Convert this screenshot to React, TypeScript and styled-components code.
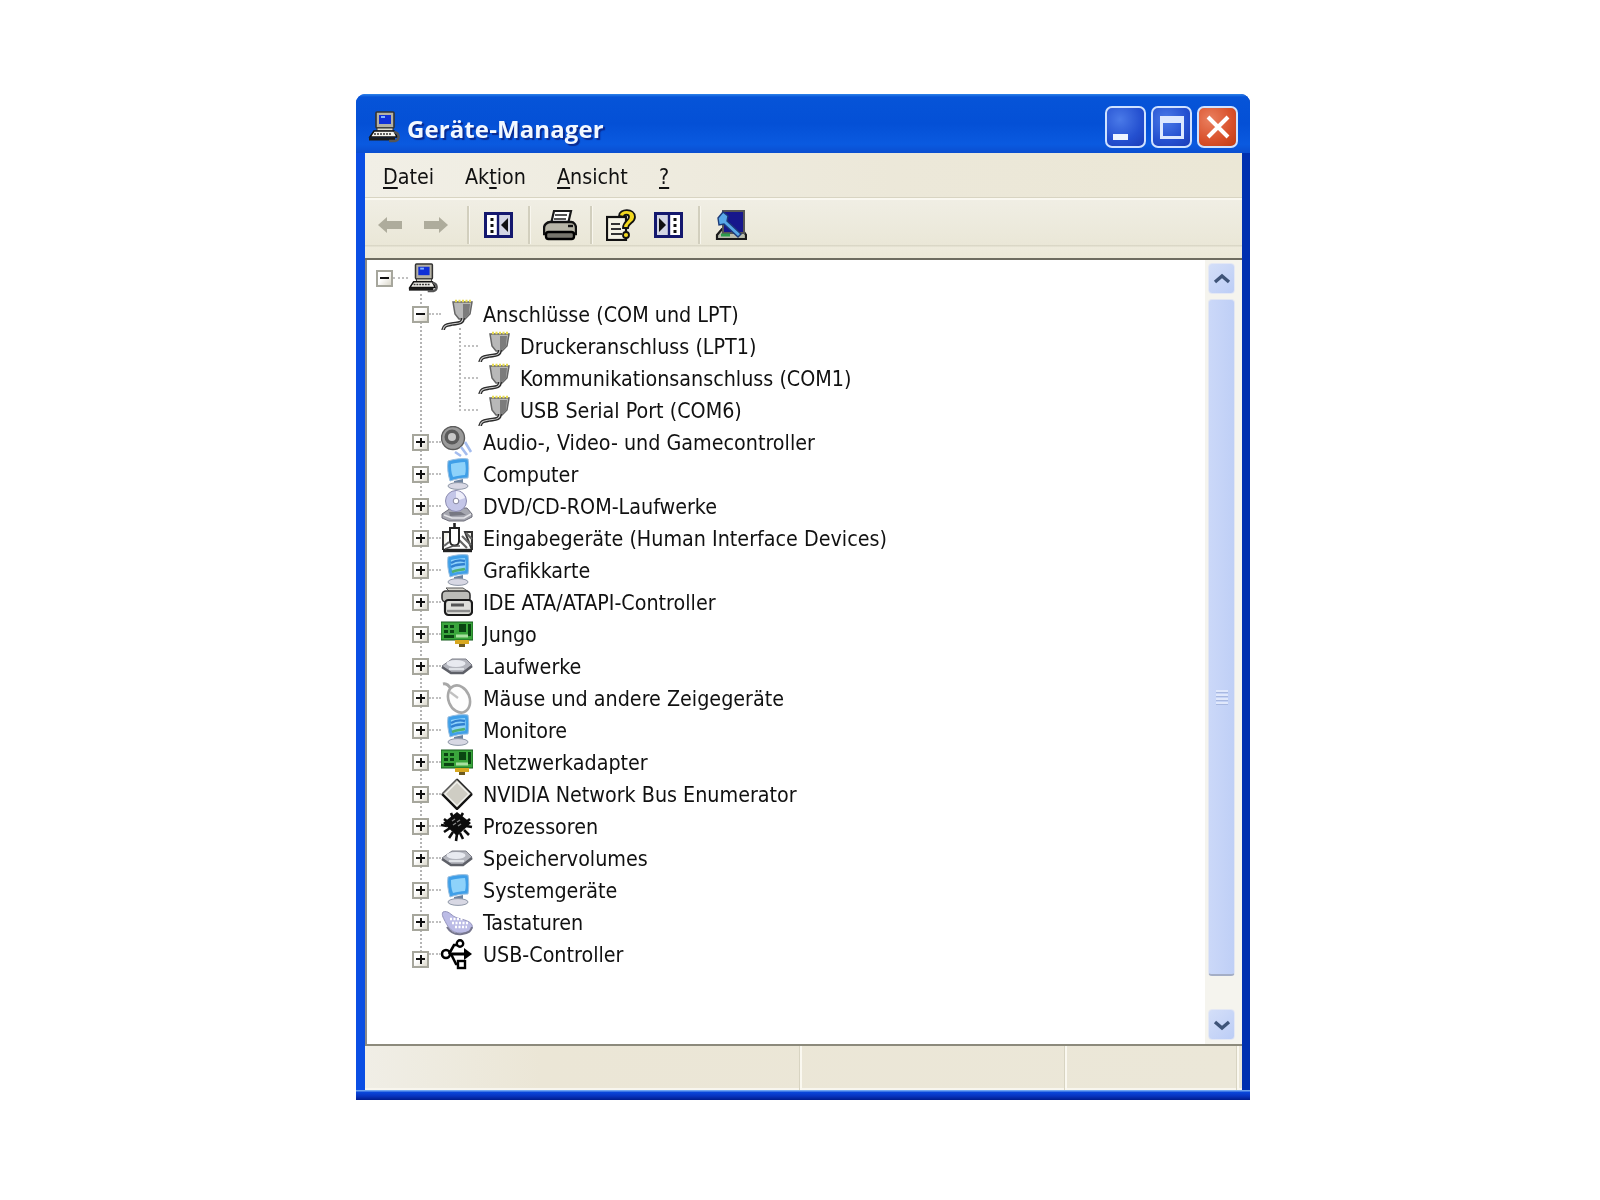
import React from 'react'
import styled, { createGlobalStyle } from 'styled-components'

const Global = createGlobalStyle`
  html, body { margin: 0; padding: 0; background: #fff; }
`

/* ---------- icons ---------- */

const S = ({ children, size = 32 }: { children: React.ReactNode; size?: number }) => (
  <svg width={size} height={size} viewBox="0 0 32 32">{children}</svg>
)

const ComputerIcon = ({ size = 32 }: { size?: number }) => (
  <S size={size}>
    <rect x="8" y="1" width="18" height="16" rx="1" fill="#b4b1a4" stroke="#333" strokeWidth="1.6" />
    <rect x="11" y="4" width="12" height="9" fill="#1030d8" />
    <rect x="13" y="5" width="4" height="2" fill="#7fb0ff" />
    <rect x="9" y="17" width="16" height="3" fill="#dedcd0" stroke="#333" />
    <path d="M6 20h20l3 6H2z" fill="#f4f3ee" stroke="#111" strokeWidth="1.6" />
    <path d="M6 23h18" stroke="#333" strokeWidth="1.6" strokeDasharray="2 1" />
    <path d="M1 28h26" stroke="#1a1a1a" strokeWidth="3" />
    <path d="M26 21c6 1 6 8 1 9h-6" stroke="#555" strokeWidth="2.4" fill="none" />
  </S>
)

const PortIcon = () => (
  <S>
    <path d="M12 4h19l-2 12-5 5h-6l-4-5z" fill="#b8b8b8" stroke="#666" strokeWidth="1.5" />
    <path d="M22 6h7l-1 10-4 4h-2z" fill="#7c7c7c" />
    <path d="M14 3h16" stroke="#e8dc50" strokeWidth="2.6" strokeDasharray="2 1.5" />
    <path d="M22 20c0 6-6 5-11 6s-8 1-9 6" stroke="#2a2a2a" strokeWidth="3.8" fill="none" />
    <path d="M22 20c0 6-6 5-11 6s-8 1-9 6" stroke="#ccc" strokeWidth="1.1" fill="none" />
  </S>
)

const SpeakerIcon = () => (
  <S>
    <circle cx="12" cy="12" r="11.5" fill="#9a9a9a" stroke="#5c5c5c" strokeWidth="1.4" />
    <circle cx="11" cy="11" r="7.5" fill="#5a5a5a" />
    <circle cx="11" cy="11" r="4" fill="#c8c8c8" />
    <path d="M14 26l6 4M20 21l6 8M24 16l6 10" stroke="#a4bcee" strokeWidth="2.6" fill="none" />
  </S>
)

const Tube = ({ children }: { children?: React.ReactNode }) => (
  <S>
    <path d="M7 3c6-2 14-3 20-2 1 6 1 13 0 19-6 0-13 1-18 3-2-6-3-14-2-20z" fill="#3f9fe8" stroke="#9cc0e0" />
    <path d="M10 6c4-1 9-2 14-2 1 5 1 9 0 13-4 0-8 1-12 2-2-4-2-9-2-13z" fill="#8ed2fa" />
    {children}
    <path d="M13 23l9-2v5h-9z" fill="#6e84a0" />
    <ellipse cx="17" cy="28" rx="10" ry="3.4" fill="#d8d8e4" stroke="#8f98a8" />
  </S>
)

const SystemIcon = () => <Tube />

const DisplayIcon = () => (
  <Tube>
    <path d="M10 9c5-3 10-3 14-2M10 13c5-3 10-2 14-3" stroke="#2f7fd0" strokeWidth="2.4" fill="none" />
    <path d="M11 18c4-2 9-2 13-3" stroke="#4cb070" strokeWidth="2.6" fill="none" />
  </Tube>
)

const DvdIcon = () => (
  <S>
    <path d="M1 24l9-6h16l5 6v3l-8 4H8l-7-3z" fill="#a6a7b0" stroke="#6c6c78" />
    <path d="M3 25l8 3h12l7-4" stroke="#e4e4e8" strokeWidth="1.5" fill="none" />
    <circle cx="15" cy="11" r="10.5" fill="#c4c6e8" stroke="#8c8cb0" />
    <path d="M15 1a10 10 0 0 1 9 7l-9 3z" fill="#eeeefa" />
    <circle cx="15" cy="11" r="2.8" fill="#fff" stroke="#8888a0" />
    <path d="M8 22l12 0 5 3-16 1z" fill="#777882" />
  </S>
)

const InputIcon = () => (
  <S>
    <path d="M2 28V10h6M24 10h7v18z" fill="#f2f1ea" stroke="#333" strokeWidth="2" />
    <path d="M2 28.5h29" stroke="#222" strokeWidth="3.4" />
    <path d="M21 14l9 9M18 18l8 8M25 11l6 6M3 24l5-4" stroke="#666" strokeWidth="2.2" />
    <path d="M9 6h9v13a4.5 4.5 0 0 1-9 0z" fill="#fff" stroke="#222" strokeWidth="2" />
    <path d="M13.5 7V1" stroke="#222" strokeWidth="2.6" />
    <path d="M4 27l8-3h7" stroke="#555" strokeWidth="1.6" fill="none" />
  </S>
)

const IdeIcon = () => (
  <S>
    <path d="M5 2h17l6 4H9z" fill="#d8d6ce" stroke="#555" />
    <rect x="1" y="5" width="28" height="11" rx="4" fill="#bcbcb8" stroke="#333" strokeWidth="1.6" />
    <rect x="4" y="14" width="27" height="15" rx="3.5" fill="#dededa" stroke="#1a1a1a" strokeWidth="2.2" />
    <path d="M10 19h13" stroke="#555" strokeWidth="3" />
    <path d="M6 25h23" stroke="#8c8c8c" strokeWidth="2.4" />
  </S>
)

const CardIcon = () => (
  <S>
    <rect x="0" y="4" width="32" height="18" fill="#3aa63c" stroke="#155a1c" />
    <g fill="#0a4412">
      <rect x="3" y="7" width="4" height="3" />
      <rect x="9" y="7" width="4" height="3" />
      <rect x="3" y="12" width="4" height="3" />
      <rect x="9" y="12" width="4" height="3" />
      <rect x="3" y="17" width="10" height="3" />
      <rect x="18" y="6" width="7" height="8" />
      <rect x="27" y="6" width="3" height="12" />
    </g>
    <path d="M15 18h12" stroke="#a8e0a0" strokeWidth="3" />
    <rect x="14" y="22" width="14" height="4" fill="#d8a820" />
    <rect x="18" y="26" width="6" height="3" fill="#6c5a20" />
  </S>
)

const DriveIcon = () => (
  <S>
    <path d="M1 16l10-7h14l6 6-2 3-8 5H9z" fill="#b4b6be" stroke="#7c7e88" />
    <ellipse cx="15" cy="13.5" rx="9.5" ry="3.4" fill="#e8eaf0" />
    <path d="M1 17l9 6h12l9-7" stroke="#5e6068" strokeWidth="2.6" fill="none" />
    <path d="M8 19h15" stroke="#eef0f4" strokeWidth="1.5" />
  </S>
)

const MouseIcon = () => (
  <S>
    <path d="M2 2c4-1 6 2 8 5" stroke="#a8a8a8" strokeWidth="3" fill="none" />
    <ellipse cx="18" cy="17" rx="10.5" ry="14" transform="rotate(-22 18 17)" fill="#fdfdfd" stroke="#a8a8a8" strokeWidth="2.6" />
    <path d="M9 10l8 6" stroke="#c0c0c0" strokeWidth="2.2" />
  </S>
)

const DiamondIcon = () => (
  <S>
    <path d="M16 1l15 15-15 15L1 16z" fill="#bebcb4" />
    <path d="M16 4L4 16l12 12 12-12z" fill="#cfcdc4" stroke="#f2f2ee" strokeWidth="1.4" />
    <path d="M1 16l15 15 15-15" stroke="#111" strokeWidth="2.4" fill="none" />
    <path d="M16 1L1 16" stroke="#555" strokeWidth="1.5" />
    <path d="M16 1l15 15" stroke="#222" strokeWidth="1.5" />
  </S>
)

const CpuIcon = () => (
  <S>
    <path d="M16 2l14 11-14 13L2 13z" fill="#0c0c0c" />
    <path d="M3 9l4 3M0 15l6 1M3 22l6-4M8 28l4-6M15 31l1-7M22 29l-3-6M28 25l-5-5M31 17l-6-1M29 9l-5 4M22 3l-3 5M10 3l2 5" stroke="#0c0c0c" strokeWidth="2.6" />
    <path d="M11 11l3-2M16 12l3-2M12 15l3-2M17 16l3-2" stroke="#888" strokeWidth="1.4" />
  </S>
)

const KeyboardIcon = () => (
  <S>
    <path d="M2 6c5-2 8 3 12 5s15 3 17 8-4 8-12 8-12-6-14-10S0 9 2 6z" fill="#bcbce6" stroke="#9494bc" />
    <path d="M9 13h13M11 17h16M14 21h12" stroke="#fff" strokeWidth="2.4" strokeDasharray="2 1.5" />
    <path d="M6 21c3 5 8 8 15 7s9-3 10-7" stroke="#77778e" strokeWidth="2" fill="none" />
  </S>
)

const UsbIcon = () => (
  <S>
    <path d="M3 16h23" stroke="#000" strokeWidth="3" />
    <path d="M23 10l8 6-8 6z" fill="#000" />
    <circle cx="5" cy="16" r="4" fill="#fff" stroke="#000" strokeWidth="2.6" />
    <path d="M8 16l5-9h4" stroke="#000" strokeWidth="2.6" fill="none" />
    <circle cx="19" cy="5.5" r="3.2" fill="#fff" stroke="#000" strokeWidth="2.4" />
    <path d="M10 16l5 10h3" stroke="#000" strokeWidth="2.6" fill="none" />
    <rect x="17" y="23" width="7" height="7" fill="#fff" stroke="#000" strokeWidth="2.4" />
  </S>
)

const BackIcon = ({ flip }: { flip?: boolean }) => (
  <svg width="24" height="16" viewBox="0 0 24 16" style={flip ? { transform: 'scaleX(-1)' } : undefined}>
    <path d="M0 8l9-8v4h15v8H9v4z" fill="#aeac9c" />
  </svg>
)

const PaneIcon = ({ flip }: { flip?: boolean }) => (
  <svg width="29" height="26" viewBox="0 0 29 26" style={flip ? { transform: 'scaleX(-1)' } : undefined}>
    <rect x="1.5" y="1.5" width="26" height="23" fill="#fff" stroke="#14186e" strokeWidth="3" />
    <rect x="14" y="3" width="12" height="20" fill="#d4d6e4" />
    <path d="M14 1v24" stroke="#14186e" strokeWidth="2.4" />
    <path d="M8 6v3M8 12v3M8 18v3" stroke="#111" strokeWidth="3" />
    <path d="M24 6v14l-7-7z" fill="#111" />
  </svg>
)

const PrinterIcon = () => (
  <svg width="34" height="32" viewBox="0 0 34 32">
    <path d="M11 2h17l-3 13H8z" fill="#fff" stroke="#1a1a1a" strokeWidth="2.2" />
    <path d="M12 6h12M11 10h12" stroke="#555" strokeWidth="2" />
    <path d="M7 13h21c3 0 5 3 5 6v6H1v-6c0-3 3-6 6-6z" fill="#b8b6a8" stroke="#111" strokeWidth="2.4" />
    <rect x="3" y="23" width="28" height="7" rx="2.5" fill="#77756c" stroke="#000" strokeWidth="2.4" />
    <path d="M25 17h5" stroke="#111" strokeWidth="2.4" />
  </svg>
)

const HelpIcon = () => (
  <svg width="32" height="32" viewBox="0 0 32 32">
    <rect x="1" y="8" width="19" height="23" fill="#f4f2e4" stroke="#111" strokeWidth="2.2" />
    <path d="M5 15h9M5 20h10M5 25h11" stroke="#333" strokeWidth="2.2" />
    <path d="M13 7c0-8 16-8 16 1 0 6-7 6-7 11h-5c0-7 6-7 6-11 0-3-5-3-5 0z" fill="#f2d820" stroke="#111" strokeWidth="1.8" />
    <circle cx="20" cy="26" r="3" fill="#f2d820" stroke="#111" strokeWidth="1.8" />
  </svg>
)

const ScanIcon = () => (
  <svg width="32" height="32" viewBox="0 0 32 32">
    <path d="M2 26l5-6h20l4 6v4H2z" fill="#b8bcac" stroke="#1a1a1a" strokeWidth="2.2" />
    <rect x="8" y="2" width="21" height="22" fill="#16168c" stroke="#555" strokeWidth="2" />
    <path d="M3 9l5-6 5 4-1 5 14 13-3 3-14-13-5 1z" fill="#58a8e8" stroke="#1c3a78" strokeWidth="1.4" />
    <path d="M6 26h9" stroke="#2c9a4c" strokeWidth="3" />
  </svg>
)

const Chevron = ({ down }: { down?: boolean }) => (
  <svg width="18" height="12" viewBox="0 0 18 12">
    <path d={down ? 'M2 3l7 6 7-6' : 'M2 9l7-6 7 6'} fill="none" stroke="#3f5478" strokeWidth="3.4" />
  </svg>
)

/* ---------- data ---------- */

type Item = { name: string; icon: React.ReactNode }

const ports = ['Druckeranschluss (LPT1)', 'Kommunikationsanschluss (COM1)', 'USB Serial Port (COM6)']

const devices: Item[] = [
  { name: 'Audio-, Video- und Gamecontroller', icon: <SpeakerIcon /> },
  { name: 'Computer', icon: <SystemIcon /> },
  { name: 'DVD/CD-ROM-Laufwerke', icon: <DvdIcon /> },
  { name: 'Eingabegeräte (Human Interface Devices)', icon: <InputIcon /> },
  { name: 'Grafikkarte', icon: <DisplayIcon /> },
  { name: 'IDE ATA/ATAPI-Controller', icon: <IdeIcon /> },
  { name: 'Jungo', icon: <CardIcon /> },
  { name: 'Laufwerke', icon: <DriveIcon /> },
  { name: 'Mäuse und andere Zeigegeräte', icon: <MouseIcon /> },
  { name: 'Monitore', icon: <DisplayIcon /> },
  { name: 'Netzwerkadapter', icon: <CardIcon /> },
  { name: 'NVIDIA Network Bus Enumerator', icon: <DiamondIcon /> },
  { name: 'Prozessoren', icon: <CpuIcon /> },
  { name: 'Speichervolumes', icon: <DriveIcon /> },
  { name: 'Systemgeräte', icon: <SystemIcon /> },
  { name: 'Tastaturen', icon: <KeyboardIcon /> },
  { name: 'USB-Controller', icon: <UsbIcon /> },
]

const App = () => {
  return (
    <Page>
      <Global />
      <Window>
        <TitleBar>
          <ComputerIcon size={32} />
          <Title>Geräte-Manager</Title>
          <Caption>
            <CaptionButton>
              <MinGlyph />
            </CaptionButton>
            <CaptionButton>
              <MaxGlyph />
            </CaptionButton>
            <CaptionButton $close>
              <svg width="28" height="28" viewBox="0 0 28 28">
                <path d="M4 4l20 20M24 4L4 24" stroke="#fff" strokeWidth="4" />
              </svg>
            </CaptionButton>
          </Caption>
        </TitleBar>

        <Client>
          <MenuBar>
            <MenuItem $w={82}><u>D</u>atei</MenuItem>
            <MenuItem $w={92}>Ak<u>t</u>ion</MenuItem>
            <MenuItem $w={102}><u>A</u>nsicht</MenuItem>
            <MenuItem $w={20}><u>?</u></MenuItem>
          </MenuBar>

          <ToolBar>
            <Tool $w={50}><BackIcon /></Tool>
            <Tool $w={42}><BackIcon flip /></Tool>
            <Sep $left={10} />
            <Tool $w={59}><PaneIcon /></Tool>
            <Sep />
            <Tool $w={60}><PrinterIcon /></Tool>
            <Sep />
            <Tool $w={60}><HelpIcon /></Tool>
            <Tool $w={32}><PaneIcon flip /></Tool>
            <Sep $left={14} />
            <Tool $w={62}><ScanIcon /></Tool>
          </ToolBar>

          <Content>
            <Tree>
              <RootRow>
                <Expander>
                  <Minus />
                </Expander>
                <RootStub />
                <ComputerIcon size={30} />
              </RootRow>
              <Branch>
                <Row>
                  <Expander $onLine>
                    <Minus />
                  </Expander>
                  <Stub />
                  <Icon><PortIcon /></Icon>
                  <Label>Anschlüsse (COM und LPT)</Label>
                </Row>
                <SubBranch>
                  {ports.map((name) => (
                    <Row key={name}>
                      <SubStub />
                      <Icon><PortIcon /></Icon>
                      <Label $sub>{name}</Label>
                    </Row>
                  ))}
                </SubBranch>
                {devices.map((d, i) => (
                  <Row key={d.name}>
                    <Expander $onLine $drop={i === devices.length - 1 ? 5 : 0}>
                      <Minus />
                      <PlusBar />
                    </Expander>
                    <Stub />
                    <Icon>{d.icon}</Icon>
                    <Label>{d.name}</Label>
                  </Row>
                ))}
              </Branch>
            </Tree>

            <ScrollBar>
              <ScrollButton><Chevron /></ScrollButton>
              <Thumb>
                <Grip />
                <Grip />
                <Grip />
                <Grip />
              </Thumb>
              <ScrollButton $down><Chevron down /></ScrollButton>
            </ScrollBar>
          </Content>

          <StatusBar>
            <StatusCell $w={437} />
            <StatusCell $w={265} />
            <StatusCell $w={172} />
          </StatusBar>
        </Client>
        <BottomEdge />
      </Window>
    </Page>
  )
}

export default App

const Page = styled.div`
  width: 1600px;
  height: 1200px;
  padding: 94px 0 0 356px;
  box-sizing: border-box;
  background: #fff;
  overflow: hidden;
`
const Window = styled.div`
  width: 894px;
  height: 1006px;
  display: flex;
  flex-direction: column;
  border-radius: 9px 9px 0 0;
  background: linear-gradient(90deg, #0a4ee4 0, #0a4ee4 9px, #0030b0 9px, #0030b0 100%);
  padding: 0 8px 0 9px;
  box-sizing: border-box;
  filter: blur(0.7px);
  font-family: "DejaVu Sans", sans-serif;
  font-stretch: condensed;
  color: #111;
`
const TitleBar = styled.div`
  height: 59px;
  flex: none;
  margin: 0 -8px 0 -9px;
  padding: 7px 9px 0 12px;
  box-sizing: border-box;
  display: flex;
  align-items: center;
  border-radius: 9px 9px 0 0;
  background: linear-gradient(180deg, #2f84ea 0, #0654d8 3px, #0450d6 50%, #0a5ae0 85%, #0a4ed0 100%);
`
const Title = styled.div`
  margin: 2px 0 0 7px;
  font-family: "Open Sans", sans-serif;
  font-stretch: normal;
  font-weight: 700;
  font-size: 24px;
  letter-spacing: 0.1px;
  color: #f2f8ff;
  text-shadow: 2px 2px 1px #0a2a90;
`
const Caption = styled.div`
  margin-left: auto;
  display: flex;
  gap: 5px;
  margin-right: 3px;
`
const CaptionButton = styled.div<{ $close?: boolean }>`
  width: 41px;
  height: 42px;
  box-sizing: border-box;
  border: 2px solid #cfe2ff;
  border-radius: 7px;
  display: flex;
  align-items: center;
  justify-content: center;
  position: relative;
  background: ${(p) =>
    p.$close
      ? 'radial-gradient(circle at 30% 30%, #ea8060, #d8502a 60%, #c03c14)'
      : 'radial-gradient(circle at 35% 30%, #4a7ae8, #2450d0 60%, #1a3cb8)'};
`
const MinGlyph = styled.div`
  width: 15px;
  height: 6px;
  background: #eef4ff;
  margin: 20px 10px 0 0;
`
const MaxGlyph = styled.div`
  width: 24px;
  height: 23px;
  box-sizing: border-box;
  border: 3px solid #dce8ff;
  border-top-width: 7px;
`
const Client = styled.div`
  height: 937px;
  flex: none;
  display: flex;
  flex-direction: column;
  background: #ece9d8;
  box-shadow: inset 1px 0 0 #dfe9ff;
`
const BottomEdge = styled.div`
  height: 10px;
  flex: none;
  margin: 0 -8px 0 -9px;
  background: linear-gradient(180deg, #6fa4f0 0, #6fa4f0 1px, #0a48dc 2px, #0834c0 6px, #001c8c 100%);
`
const MenuBar = styled.div`
  height: 47px;
  flex: none;
  box-sizing: border-box;
  padding: 2px 0 0 18px;
  display: flex;
  align-items: center;
  font-size: 21.3px;
  border-bottom: 2px solid #faf8f0;
  box-shadow: inset 0 -1px 0 #d8d4c2;
  background: linear-gradient(90deg, #f1efe6 0%, #ece8d9 60%, #ebe7d6 100%);
`
const MenuItem = styled.div<{ $w: number }>`
  width: ${(p) => p.$w}px;
  flex: none;
  u { text-underline-offset: 3px; }
`
const ToolBar = styled.div`
  height: 58px;
  flex: none;
  box-sizing: border-box;
  padding: 4px 0 13px 0;
  display: flex;
  align-items: center;
  background: linear-gradient(180deg, #f0eee4 0, #eae7d7 78%, #d8d5c4 78%, #eeebdc 82%, #ece9d8 100%);
`
const Tool = styled.div<{ $w: number }>`
  width: ${(p) => p.$w}px;
  flex: none;
  display: flex;
  justify-content: center;
`
const Sep = styled.div<{ $left?: number }>`
  width: 2px;
  height: 38px;
  flex: none;
  margin-left: ${(p) => p.$left ?? 0}px;
  background: #d2cfbe;
  box-shadow: 1px 0 0 #f8f6ee;
`
const Content = styled.div`
  flex: 1;
  min-height: 0;
  display: flex;
  background: #fff;
  border-top: 2px solid #6e6c60;
  border-bottom: 2px solid #8c8a7c;
`
const Tree = styled.div`
  flex: 1;
  padding-top: 2px;
  border-left: 2px solid #8a8a8a;
  background: #fff;
`
const RootRow = styled.div`
  height: 32px;
  margin-bottom: 4px;
  padding-left: 9px;
  display: flex;
  align-items: center;
`
const Branch = styled.div`
  position: relative;
  margin-left: 53px;
  &::before {
    content: '';
    position: absolute;
    left: 0;
    top: -4px;
    bottom: 10px;
    border-left: 2px dotted #b4b4b4;
  }
`
const SubBranch = styled.div`
  position: relative;
  margin-left: 39px;
  &::before {
    content: '';
    position: absolute;
    left: 0;
    top: -2px;
    bottom: 15px;
    border-left: 2px dotted #b4b4b4;
  }
`
const Row = styled.div`
  height: 32px;
  display: flex;
  align-items: center;
  position: relative;
`
const Expander = styled.div<{ $onLine?: boolean; $drop?: number }>`
  width: 17px;
  height: 17px;
  flex: none;
  box-sizing: border-box;
  position: relative;
  margin-left: ${(p) => (p.$onLine ? -8 : 0)}px;
  top: ${(p) => p.$drop ?? 0}px;
  border: 2px solid #a6a69c;
  background: linear-gradient(135deg, #fff 40%, #dcd9cc 100%);
  display: flex;
  align-items: center;
  justify-content: center;
`
const Minus = styled.div`
  width: 9px;
  height: 2px;
  background: #111;
`
const PlusBar = styled.div`
  position: absolute;
  width: 2px;
  height: 9px;
  background: #111;
`
const Stub = styled.div`
  width: 12px;
  flex: none;
  border-top: 2px dotted #c0c0c0;
`
const RootStub = styled(Stub)`
  width: 15px;
`
const SubStub = styled(Stub)`
  width: 19px;
`
const Icon = styled.div`
  width: 32px;
  height: 32px;
  flex: none;
  svg { display: block; }
`
const Label = styled.div<{ $sub?: boolean }>`
  margin-left: ${(p) => (p.$sub ? 10 : 10)}px;
  font-size: 21.3px;
  white-space: nowrap;
`
const ScrollBar = styled.div`
  width: 37px;
  flex: none;
  box-sizing: border-box;
  padding: 3px 7px 4px 3px;
  display: flex;
  flex-direction: column;
  background: #f5f4ee;
`
const ScrollButton = styled.div<{ $down?: boolean }>`
  height: 29px;
  flex: none;
  margin-top: ${(p) => (p.$down ? 33 : 0)}px;
  border-radius: 4px;
  border: 1px solid #e4e8f4;
  background: linear-gradient(135deg, #d4dff8, #bccdf6);
  display: flex;
  align-items: center;
  justify-content: center;
`
const Thumb = styled.div`
  flex: 1;
  margin-top: 5px;
  padding-top: 120px;
  border-radius: 4px;
  border: 1px solid #e2e6f2;
  border-bottom: 2px solid #a4aec6;
  background: linear-gradient(90deg, #cbd8f8, #bfcff6);
  display: flex;
  flex-direction: column;
  align-items: center;
  justify-content: center;
  gap: 1px;
`
const Grip = styled.div`
  width: 12px;
  height: 2px;
  background: #e0e8fb;
  border-bottom: 1px solid #a8b8e0;
`
const StatusBar = styled.div`
  height: 44px;
  flex: none;
  display: flex;
  box-shadow: inset 0 -2px 0 #f8f6ee;
  background: linear-gradient(90deg, #f0eee6 0%, #ebe6d6 20%, #ebe7d8 100%);
`
const StatusCell = styled.div<{ $w: number }>`
  width: ${(p) => p.$w}px;
  flex: none;
  box-sizing: border-box;
  border-right: 2px solid #faf8f0;
  box-shadow: inset -1px 0 0 #d8d4c2;
`
